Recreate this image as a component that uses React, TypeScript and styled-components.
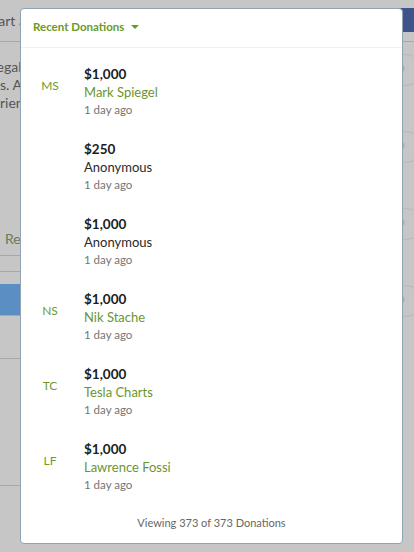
import React from "react";
import styled, { createGlobalStyle } from "styled-components";

const Global = createGlobalStyle`
  html, body { margin: 0; padding: 0; }
  body { font-family: Lato, "Open Sans", sans-serif; background: #c6c6c6; }
  * { box-sizing: border-box; }
`;

const Page = styled.div`
  position: relative;
  width: 414px;
  height: 552px;
  overflow: hidden;
  background: #c6c6c6;
`;

const TopBar = styled.div`
  height: 42px;
  display: flex;
  align-items: flex-start;
  justify-content: space-between;
  border-bottom: 1px solid #a8a8a8;
`;

const TopLink = styled.span`
  margin-top: 12px;
  font-size: 14px;
  color: #555;
  text-indent: -14px;
  display: block;
  white-space: nowrap;
`;

const DarkButton = styled.div`
  margin-top: 8px;
  width: 18px;
  height: 24px;
  background: #3e548a;
  border-radius: 4px 0 0 4px;
`;

const Body = styled.div`
  display: grid;
  grid-template-columns: 1fr 30px;
`;

const Main = styled.div`
  display: flex;
  flex-direction: column;
`;

const Para = styled.p`
  margin: 16px 0 0;
  font-size: 14px;
  line-height: 18px;
  color: #555;
  text-indent: -10px;
  white-space: pre-line;
`;

const Tab = styled.div`
  margin-top: 110px;
  height: 34px;
  font-size: 14px;
  color: #6b7a58;
  padding-left: 5px;
  display: flex;
  align-items: center;
  border-bottom: 1px solid #a8a8a8;
`;

const Row = styled.div<{ $h: number; $blue?: boolean }>`
  height: ${(p) => p.$h}px;
  border-bottom: 1px solid #a8a8a8;
  background: ${(p) => (p.$blue ? "#5b8fc4" : "transparent")};
`;

const Gap = styled.div<{ $h: number }>`
  height: ${(p) => p.$h}px;
`;

const Side = styled.div`
  display: flex;
  flex-direction: column;
  gap: 45px;
  padding-top: 12px;
  padding-left: 6px;
`;

const Circle = styled.div`
  width: 32px;
  height: 32px;
  border-radius: 50%;
  border: 1px solid #b8b8b8;
  background: radial-gradient(circle at 30% 45%, #acacac 0 4px, transparent 5px);
`;

const Modal = styled.div`
  position: absolute;
  left: 20px;
  top: 8px;
  width: 383px;
  height: 536px;
  background: #fff;
  border: 1px solid #8ea3b3;
  border-radius: 4px;
  display: flex;
  flex-direction: column;
  font-family: Lato, "Open Sans", sans-serif;
`;

const Header = styled.div`
  height: 39px;
  flex: none;
  display: flex;
  align-items: center;
  gap: 7px;
  padding-left: 12px;
  padding-bottom: 3px;
  border-bottom: 1px solid #f0f0f0;
`;

const Title = styled.span`
  font-size: 11.5px;
  font-weight: 700;
  color: #6a9a28;
`;

const Caret = styled.span`
  width: 0;
  height: 0;
  border-left: 4px solid transparent;
  border-right: 4px solid transparent;
  border-top: 4px solid #6a9a28;
  margin-top: 1px;
`;

const List = styled.div`
  display: flex;
  flex-direction: column;
  padding-top: 17px;
  flex: 1;
`;

const Item = styled.div`
  height: 75px;
  flex: none;
  display: flex;
  align-items: flex-start;
  padding-left: 9px;
  gap: 14px;

  &:last-child {
    height: 62px;
  }
`;

const Avatar = styled.div`
  width: 40px;
  height: 40px;
  flex: none;
  display: flex;
  align-items: center;
  justify-content: center;
  font-size: 12px;
  color: #6f9a30;
`;

const Info = styled.div`
  display: flex;
  flex-direction: column;
`;

const Amount = styled.div`
  font-size: 13.5px;
  font-weight: 700;
  color: #1c1c1c;
  line-height: 18px;
`;

const Name = styled.div<{ $anon?: boolean }>`
  font-size: 13px;
  line-height: 18px;
  color: ${(p) => (p.$anon ? "#2a2a2a" : "#6b9530")};
`;

const Time = styled.div`
  font-size: 11.5px;
  line-height: 18px;
  color: #757575;
`;

const Footer = styled.div`
  height: 27px;
  flex: none;
  text-align: center;
  font-size: 11px;
  color: #666;
`;

const donations = [
  { initials: "MS", amount: "$1,000", name: "Mark Spiegel" },
  { initials: "", amount: "$250", name: "Anonymous", anon: true },
  { initials: "", amount: "$1,000", name: "Anonymous", anon: true },
  { initials: "NS", amount: "$1,000", name: "Nik Stache" },
  { initials: "TC", amount: "$1,000", name: "Tesla Charts" },
  { initials: "LF", amount: "$1,000", name: "Lawrence Fossi" },
];

export default function App() {
  return (
    <Page>
      <Global />
      <TopBar>
        <TopLink>Start a campaign</TopLink>
        <DarkButton />
      </TopBar>
      <Body>
        <Main>
          <Para>{"llegal\ns. And\nrient"}</Para>
          <Tab>Re</Tab>
          <Row $h={16} />
          <Gap $h={12} />
          <Row $h={32} $blue />
          <Row $h={43} />
          <Gap $h={76} />
          <Row $h={51} />
        </Main>
        <Side>
          <Circle />
          <Circle />
          <Circle />
          <Circle />
        </Side>
      </Body>
      <Modal>
        <Header>
          <Title>Recent Donations</Title>
          <Caret />
        </Header>
        <List>
          {donations.map((d, i) => (
            <Item key={i}>
              <Avatar>{d.initials}</Avatar>
              <Info>
                <Amount>{d.amount}</Amount>
                <Name $anon={d.anon}>{d.name}</Name>
                <Time>1 day ago</Time>
              </Info>
            </Item>
          ))}
        </List>
        <Footer>Viewing 373 of 373 Donations</Footer>
      </Modal>
    </Page>
  );
}
